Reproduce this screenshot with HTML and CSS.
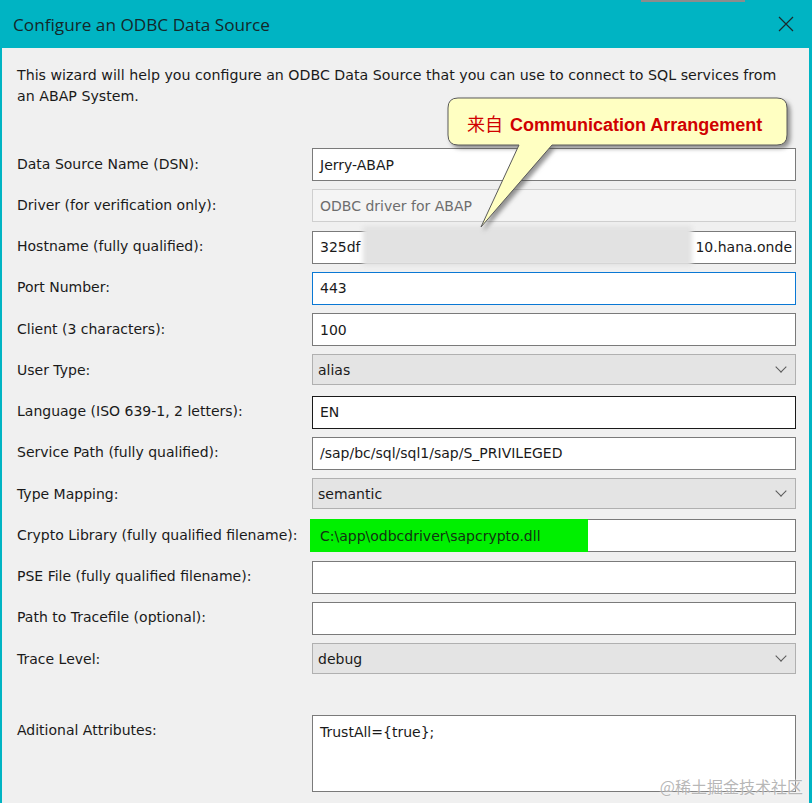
FILE: index.html
```html
<!DOCTYPE html>
<html lang="en">

<head>
    <meta charset="UTF-8">
    <meta name="viewport" content="width=device-width, initial-scale=1.0">
    <title>Configure an ODBC Data Source</title>
    <link rel="stylesheet" href="styles.css">
</head>

<body>
    <div class="window">
        <div class="titlebar">
            <span class="title">Configure an ODBC Data Source</span>
            <span class="topmark"></span>
            <svg class="close" width="16" height="16" viewBox="0 0 16 16">
                <path d="M1 1 L15 15 M15 1 L1 15" stroke="#1b2a2c" stroke-width="1.2" fill="none" />
            </svg>
        </div>

        <div class="content">
            <p class="intro">This wizard will help you configure an ODBC Data Source that you can use to connect to SQL services from an ABAP System.</p>

            <div class="form">
                <label>Data Source Name (DSN):</label>
                <div class="field">Jerry-ABAP</div>

                <label>Driver (for verification only):</label>
                <div class="field disabled">ODBC driver for ABAP</div>

                <label>Hostname (fully qualified):</label>
                <div class="field host"><span>325df</span><span>10.hana.onde</span></div>

                <label>Port Number:</label>
                <div class="field focus">443</div>

                <label>Client (3 characters):</label>
                <div class="field">100</div>

                <label>User Type:</label>
                <div class="select">alias<i class="chev"></i></div>

                <label>Language (ISO 639-1, 2 letters):</label>
                <div class="field dark">EN</div>

                <label>Service Path (fully qualified):</label>
                <div class="field">/sap/bc/sql/sql1/sap/S_PRIVILEGED</div>

                <label>Type Mapping:</label>
                <div class="select">semantic<i class="chev"></i></div>

                <label>Crypto Library (fully qualified filename):</label>
                <div class="field crypto"><span class="mark">C:\app\odbcdriver\sapcrypto.dll</span></div>

                <label>PSE File (fully qualified filename):</label>
                <div class="field"></div>

                <label>Path to Tracefile (optional):</label>
                <div class="field"></div>

                <label>Trace Level:</label>
                <div class="select">debug<i class="chev"></i></div>
            </div>

            <div class="form attrs">
                <label>Aditional Attributes:</label>
                <div class="field area">TrustAll={true};</div>
            </div>
        </div>

        <!-- blurred-out part of the hostname -->
        <div class="blurbox"></div>

        <div class="callout">
            <svg width="360" height="140" viewBox="0 0 360 140">
                <path d="M16,3 H335 Q345,3 345,13 V40 Q345,50 335,50 H110 L39,132 L77,50 H16 Q6,50 6,40 V13 Q6,3 16,3 Z"
                    fill="#ffffc2" stroke="#5a5a5a" stroke-width="1" />
            </svg>
            <span class="callout-text"><b class="cjk">来自</b> Communication Arrangement</span>
        </div>

        <div class="watermark">@稀土掘金技术社区</div>
    </div>
</body>

</html>
```

FILE: styles.css
```css
* {
    box-sizing: border-box;
}

body {
    margin: 0;
    background: #f0f0f0;
}

.window {
    position: relative;
    width: 812px;
    height: 803px;
    overflow: hidden;
    background: #f0f0f0;
    border-left: 2px solid #00b4c3;
    border-right: 3px solid #00b4c3;
    font-family: "DejaVu Sans", sans-serif;
    font-size: 14px;
    color: #1a1a1a;
}

.titlebar {
    position: relative;
    height: 48px;
    margin-left: -2px;
    margin-right: -3px;
    background: #00b4c3;
    display: flex;
    align-items: center;
    justify-content: space-between;
    padding: 0 18px 0 13px;
}

.title {
    font-family: "Open Sans", sans-serif;
    font-size: 17.2px;
    color: #14282a;
}

.topmark {
    position: absolute;
    left: 641px;
    top: 0;
    width: 104px;
    height: 2px;
    background: #8c8c8c;
}

.content {
    padding: 0 0 0 15px;
}

.intro {
    margin: 17px 0 0 0;
    width: 772px;
    line-height: 21px;
    font-size: 14.2px;
}

.form {
    display: grid;
    grid-template-columns: 295px 484px;
    grid-auto-rows: 33px;
    row-gap: 8.25px;
    margin-top: 41px;
}

.form label {
    align-self: center;
    white-space: nowrap;
    padding-bottom: 2px;
}

.form.attrs {
    grid-auto-rows: 77px;
    margin-top: 39px;
}

.form.attrs label {
    align-self: start;
    padding-top: 7px;
}

.field {
    height: 33px;
    background: #fff;
    border: 1px solid #7a7a7a;
    padding: 0 7px;
    display: flex;
    align-items: center;
    white-space: nowrap;
    overflow: hidden;
}

.field.disabled {
    background: #f4f4f4;
    border-color: #cfcfcf;
    color: #6d6d6d;
}

.field.focus {
    border-color: #0a78d4;
}

.field.dark {
    border-color: #1a1a1a;
}

.field.host {
    justify-content: space-between;
    padding-right: 3px;
}

.field.crypto {
    padding: 0;
    overflow: visible;
}

.mark {
    display: flex;
    align-items: center;
    height: 33px;
    width: 278px;
    margin-left: -3px;
    padding-left: 10px;
    background: #00f000;
    color: #123212;
}

.field.area {
    height: 77px;
    align-items: flex-start;
    padding-top: 8px;
}

.select {
    position: relative;
    height: 31px;
    background: #e4e4e4;
    border: 1px solid #b0b0b0;
    padding: 0 5px;
    display: flex;
    align-items: center;
}

.chev {
    position: absolute;
    right: 10px;
    top: 8px;
    width: 8px;
    height: 8px;
    border-right: 1px solid #5a5a5a;
    border-bottom: 1px solid #5a5a5a;
    transform: rotate(45deg);
}

.blurbox {
    position: absolute;
    left: 361px;
    top: 226px;
    width: 329px;
    height: 40px;
    background: #e2e2e2;
    filter: blur(2px);
}

.callout {
    position: absolute;
    left: 440px;
    top: 95px;
    width: 360px;
    height: 140px;
}

.callout svg {
    position: absolute;
    left: 0;
    top: 0;
    filter: drop-shadow(3px 3px 2px rgba(60, 60, 60, 0.55));
}

.callout-text {
    position: absolute;
    left: 25px;
    top: 15px;
    font-family: "Liberation Sans", Arial, sans-serif;
    font-weight: bold;
    font-size: 18px;
    color: #d00000;
    white-space: nowrap;
}

.cjk {
    font-family: "Noto Sans CJK SC", sans-serif;
    font-weight: normal;
    margin-right: 2px;
}

.watermark {
    position: absolute;
    right: 6px;
    bottom: 5px;
    font-family: "Noto Sans CJK SC", sans-serif;
    font-size: 16px;
    color: rgba(160, 160, 160, 0.75);
    text-shadow: 0 0 2px #fff;
}
```
